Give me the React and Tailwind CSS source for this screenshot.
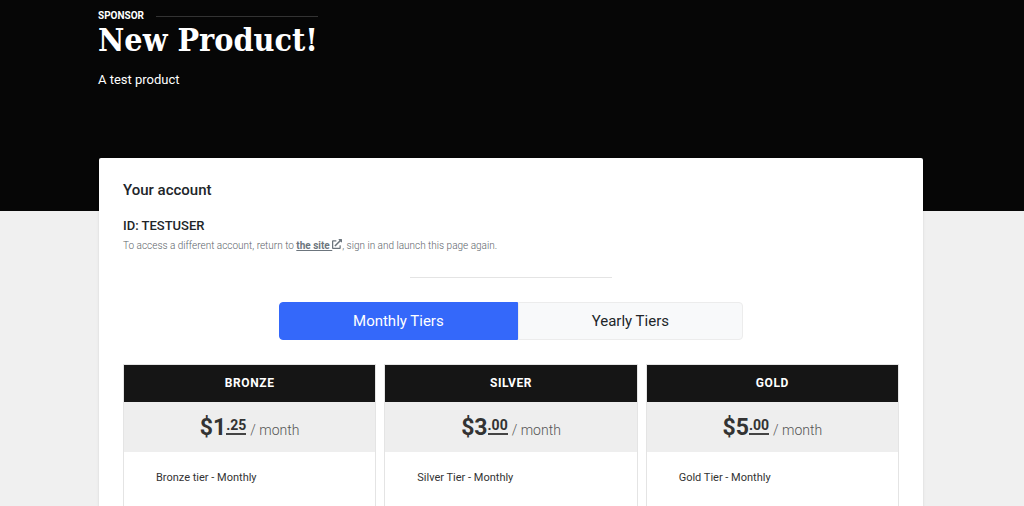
import { useState } from "react";
import { FaExternalLinkAlt } from "react-icons/fa";

const tiers = [
  { name: "Bronze", dollars: 1, cents: "25", monthly: "Bronze tier - Monthly", yearly: "Bronze tier - Yearly" },
  { name: "Silver", dollars: 3, cents: "00", monthly: "Silver Tier - Monthly", yearly: "Silver Tier - Yearly" },
  { name: "Gold", dollars: 5, cents: "00", monthly: "Gold Tier - Monthly", yearly: "Gold Tier - Yearly" },
];

const TierCard = ({ tier, period }) => (
  <article className="flex flex-col border border-b-0 border-[#e4e4e4] bg-white">
    <h3 className="bg-[#151515] text-center text-[12px] leading-[37px] font-bold tracking-wider text-white uppercase">
      {tier.name}
    </h3>
    <p className="flex h-[50px] items-center justify-center bg-[#eeeeee] pt-0.5 text-[#333333]">
      <span className="text-[23px] font-bold">${tier.dollars}</span>
      <span className="mb-1 border-b-2 border-[#444444] text-[14px] leading-4 font-bold">
        .{tier.cents}
      </span>
      <span className="mt-1 ml-1 text-[14px] font-light text-[#555555]">
        / {period === "monthly" ? "month" : "year"}
      </span>
    </p>
    <p className="px-8 py-4.5 text-[11px] leading-4 text-[#333333]">{tier[period]}</p>
  </article>
);

const App = () => {
  const [period, setPeriod] = useState("monthly");

  return (
    <div className="flex min-h-screen flex-col bg-[#f0f0f0] font-['Roboto',sans-serif] text-[#212529]">
      <header className="bg-[#060606] pt-2 pr-[101px] pb-[121px] pl-[98px] text-white">
        <div className="w-fit">
          <div className="flex items-center gap-3 text-[10px] leading-4 font-bold">
            SPONSOR
            <span className="h-px flex-1 bg-[#333333]" />
          </div>
          <h1 className="font-['Roboto_Slab','DejaVu_Serif_Condensed','DejaVu_Serif',serif] text-[32px] leading-8 font-bold">
            New Product!
          </h1>
        </div>
        <p className="mt-3.5 text-[13px] leading-5">A test product</p>
      </header>

      {/* Account card sits over the bottom edge of the header */}
      <main className="-mt-[53px] flex flex-1 flex-col pr-[101px] pl-[99px]">
        <section className="flex flex-1 flex-col rounded-t-xs bg-white px-6 pt-6 shadow-sm">
          <h2 className="text-[15px] leading-4 font-medium">Your account</h2>
          <p className="mt-5 text-[13px] leading-4 font-medium">ID: TESTUSER</p>
          <p className="mt-1 text-[10px] leading-4 font-light text-[#5c646b]">
            To access a different account, return to{" "}
            <a href="#site" className="font-bold text-[#6c757d] underline">
              the site <FaExternalLinkAlt className="inline size-2.5 align-baseline" />
            </a>
            , sign in and launch this page again.
          </p>

          <hr className="mx-auto mt-[23px] w-[26%] border-[#e4e4e4]" />

          <div className="mx-auto mt-6 flex">
            <button
              type="button"
              aria-pressed={period === "monthly"}
              onClick={() => setPeriod("monthly")}
              className="rounded-l border border-[#3468fa] bg-[#3468fa] px-[73px] py-2 text-[15px] leading-5 text-white"
            >
              Monthly Tiers
            </button>
            <button
              type="button"
              aria-pressed={period === "yearly"}
              onClick={() => setPeriod("yearly")}
              className="rounded-r border border-[#ececec] bg-[#f8f9fa] px-[73px] py-2 text-[15px] leading-5"
            >
              Yearly Tiers
            </button>
          </div>

          <div className="mt-6 grid flex-1 grid-cols-3 gap-2">
            {tiers.map((tier) => (
              <TierCard key={tier.name} tier={tier} period={period} />
            ))}
          </div>
        </section>
      </main>
    </div>
  );
};

export default App;
